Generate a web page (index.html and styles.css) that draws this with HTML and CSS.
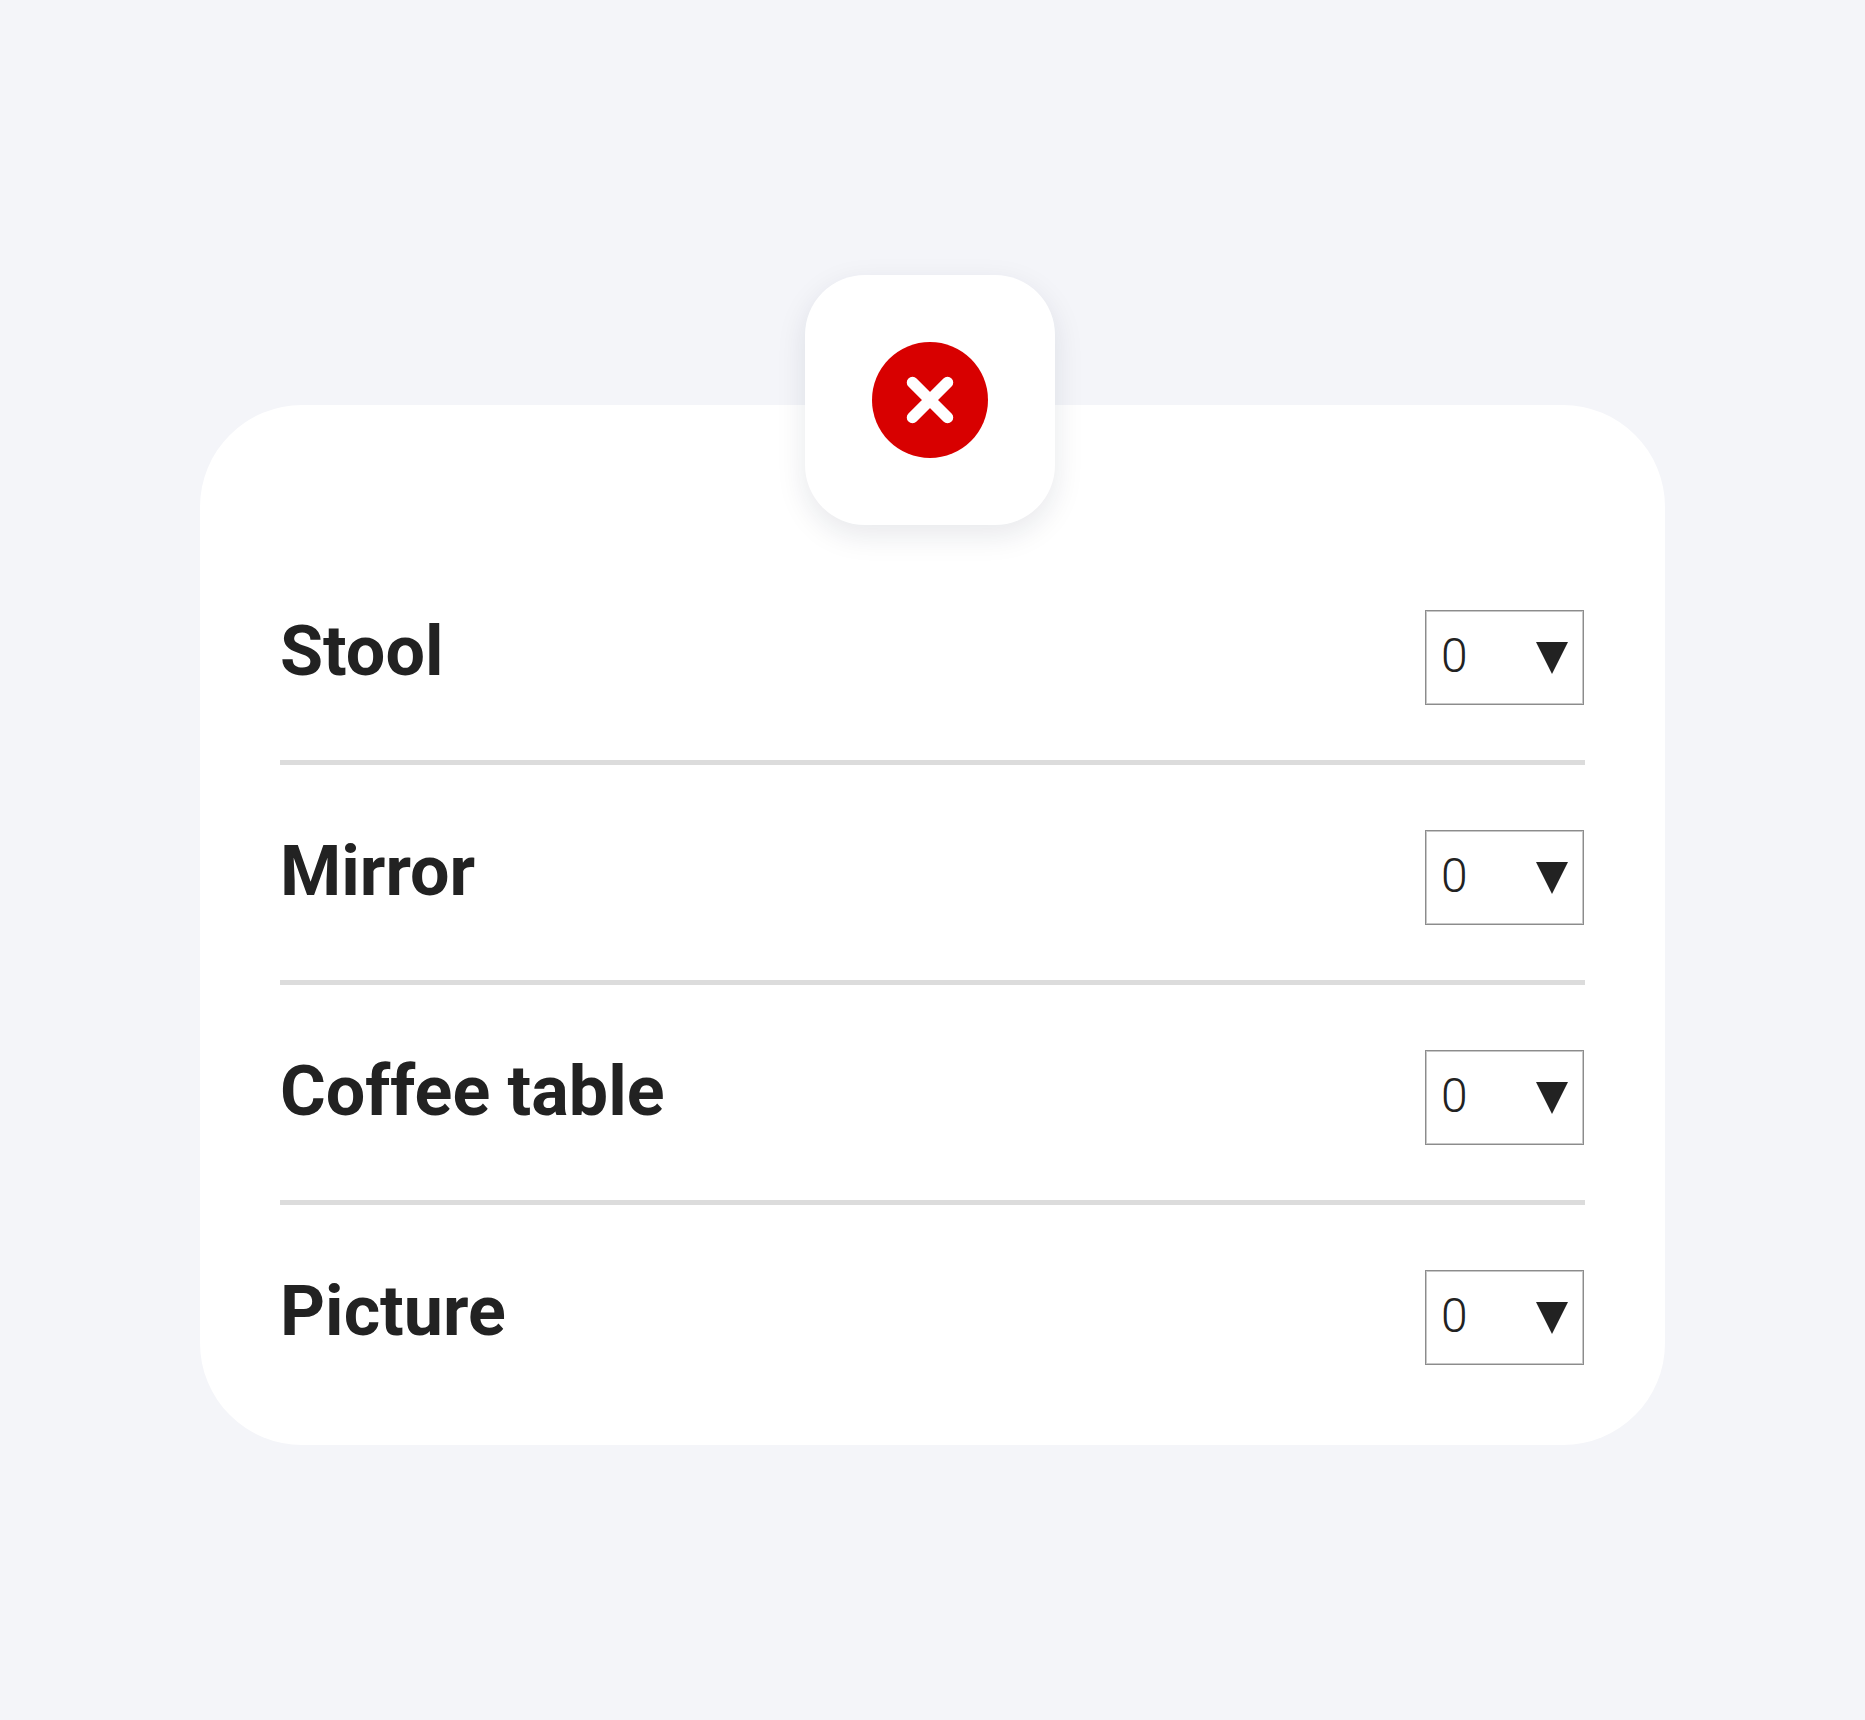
FILE: index.html
```html
<!DOCTYPE html>
<html lang="en">
<head>
<meta charset="utf-8">
<meta name="viewport" content="width=device-width, initial-scale=1">
<title>Items</title>
<link rel="stylesheet" href="styles.css">
</head>
<body>
<main class="card">
  <header class="card-header">
    <button class="close" type="button" aria-label="Close">
      <svg class="close-icon" viewBox="0 0 116 116" aria-hidden="true">
        <circle cx="58" cy="58" r="58" fill="#d80000"/>
        <path d="M40.500 40.500 75.500 75.500M75.500 40.500 40.500 75.500" stroke="#fff" stroke-width="11.500" stroke-linecap="round"/>
      </svg>
    </button>
  </header>
  <ul class="items">
    <li class="item">
      <label class="name" for="stool">Stool</label>
      <span class="quantity">
        <select id="stool"><option>0</option><option>1</option><option>2</option><option>3</option></select>
        <svg class="arrow" viewBox="0 0 32 32" aria-hidden="true"><path d="M0 0h32L16 32z" fill="#222"/></svg>
      </span>
    </li>
    <li class="item">
      <label class="name" for="mirror">Mirror</label>
      <span class="quantity">
        <select id="mirror"><option>0</option><option>1</option><option>2</option><option>3</option></select>
        <svg class="arrow" viewBox="0 0 32 32" aria-hidden="true"><path d="M0 0h32L16 32z" fill="#222"/></svg>
      </span>
    </li>
    <li class="item">
      <label class="name" for="coffee-table">Coffee table</label>
      <span class="quantity">
        <select id="coffee-table"><option>0</option><option>1</option><option>2</option><option>3</option></select>
        <svg class="arrow" viewBox="0 0 32 32" aria-hidden="true"><path d="M0 0h32L16 32z" fill="#222"/></svg>
      </span>
    </li>
    <li class="item">
      <label class="name" for="picture">Picture</label>
      <span class="quantity">
        <select id="picture"><option>0</option><option>1</option><option>2</option><option>3</option></select>
        <svg class="arrow" viewBox="0 0 32 32" aria-hidden="true"><path d="M0 0h32L16 32z" fill="#222"/></svg>
      </span>
    </li>
  </ul>
</main>
</body>
</html>
```
FILE: styles.css
```css
* {
  box-sizing: border-box;
}

body {
  margin: 0;
  padding: 405px 200px 275px;
  background: #f4f5f9;
  color: #222;
  font-family: Roboto, "Liberation Sans", sans-serif;
}

.card {
  padding: 0 80px 25px;
  border-radius: 102px;
  background: #fff;
}

.card-header {
  display: flex;
  justify-content: center;
  padding: 0 5px 20px 0;
}

.close {
  display: grid;
  place-items: center;
  width: 250px;
  height: 250px;
  margin-top: -130px;
  padding: 0;
  border: 0;
  border-radius: 60px;
  background: #fff;
  box-shadow: 0 10px 30px rgba(20, 30, 60, 0.1);
  cursor: pointer;
}

.close-icon {
  width: 116px;
  height: 116px;
}

.items {
  margin: 0;
  padding: 0;
  list-style: none;
}

.item {
  display: flex;
  align-items: flex-start;
  justify-content: space-between;
  padding: 65px 0 55px;
  border-bottom: 5px solid #dcdcdc;
}

.item:last-child {
  border-bottom: 0;
}

.name {
  font-size: 70px;
  font-weight: 700;
  line-height: 82px;
}

.quantity {
  position: relative;
  width: 159px;
  margin-right: 1px;
}

.quantity select {
  display: block;
  width: 100%;
  height: 95px;
  padding: 0 50px 5px 15px;
  border: 1px solid #8c8c8c;
  border-radius: 0;
  appearance: none;
  background: #fff;
  box-shadow: inset 0 0 0 1px #c8c8c8;
  color: inherit;
  font: 300 48px Roboto, "Liberation Sans", sans-serif;
}

.arrow {
  position: absolute;
  top: 32px;
  right: 16px;
  width: 32px;
  height: 32px;
  pointer-events: none;
}
```
